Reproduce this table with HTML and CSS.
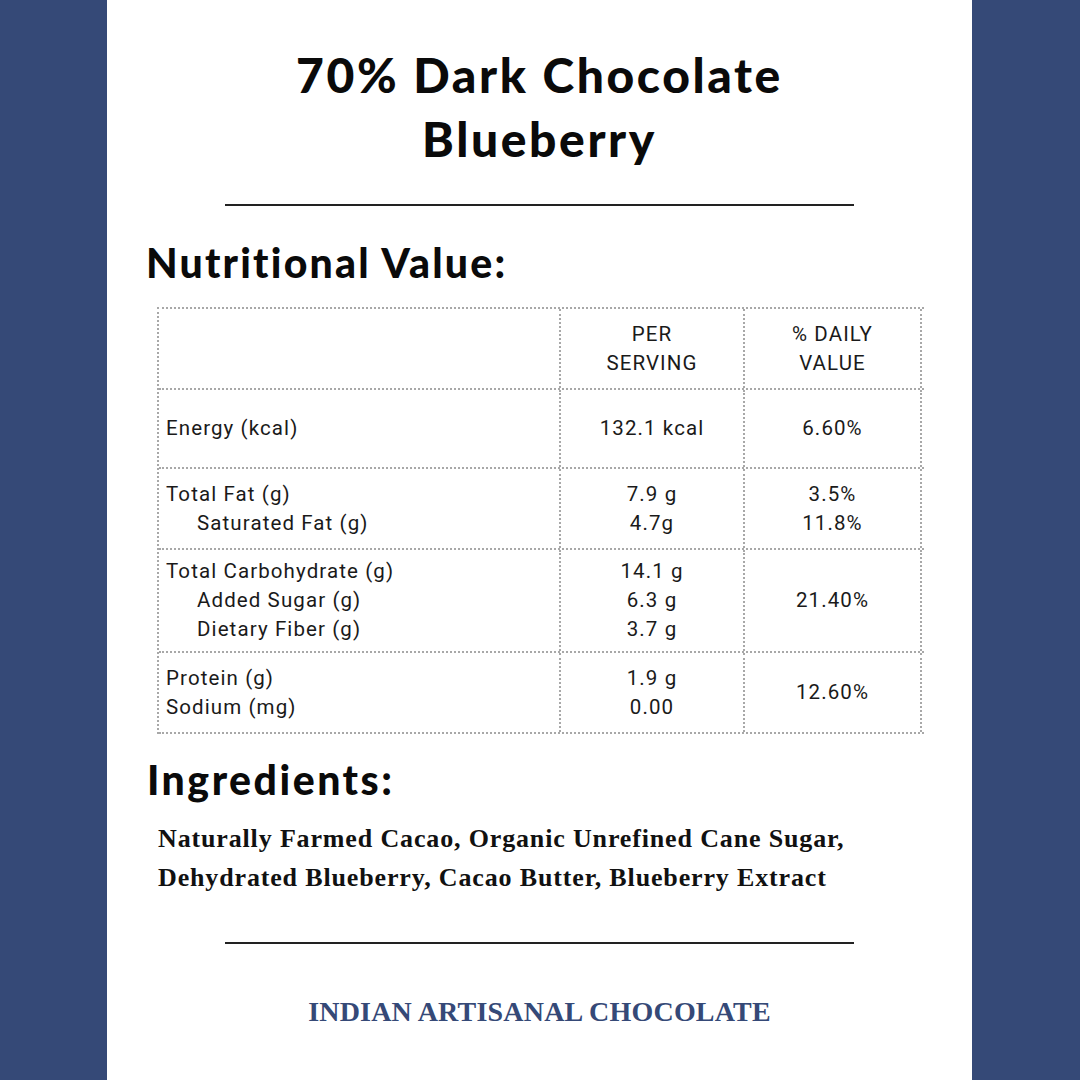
FILE: index.html
```html
<!DOCTYPE html>
<html>
<head>
<meta charset="utf-8">
<link rel="stylesheet" href="styles.css">
</head>
<body>
<div class="page">
  <div class="side"></div>
  <main class="panel">
    <h1 class="title">70% Dark Chocolate<br>Blueberry</h1>
    <hr class="rule rule-top">
    <h2 class="section nv">Nutritional Value:</h2>
    <div class="table">
      <div class="row head">
        <div class="cell c1"></div>
        <div class="cell c2">PER<br>SERVING</div>
        <div class="cell c3">% DAILY<br>VALUE</div>
      </div>
      <div class="row r-energy">
        <div class="cell c1">Energy (kcal)</div>
        <div class="cell c2">132.1 kcal</div>
        <div class="cell c3">6.60%</div>
      </div>
      <div class="row r-fat">
        <div class="cell c1"><span>Total Fat (g)</span><span class="sub">Saturated Fat (g)</span></div>
        <div class="cell c2"><span>7.9 g</span><span>4.7g</span></div>
        <div class="cell c3"><span>3.5%</span><span>11.8%</span></div>
      </div>
      <div class="row r-carb">
        <div class="cell c1"><span>Total Carbohydrate (g)</span><span class="sub">Added Sugar (g)</span><span class="sub">Dietary Fiber (g)</span></div>
        <div class="cell c2"><span>14.1 g</span><span>6.3 g</span><span>3.7 g</span></div>
        <div class="cell c3">21.40%</div>
      </div>
      <div class="row r-prot">
        <div class="cell c1"><span>Protein (g)</span><span>Sodium (mg)</span></div>
        <div class="cell c2"><span>1.9 g</span><span>0.00</span></div>
        <div class="cell c3">12.60%</div>
      </div>
    </div>
    <h2 class="section ing">Ingredients:</h2>
    <p class="ingredients">Naturally Farmed Cacao, Organic Unrefined Cane Sugar,<br>Dehydrated Blueberry, Cacao Butter, Blueberry Extract</p>
    <hr class="rule rule-bottom">
    <p class="brand">INDIAN ARTISANAL CHOCOLATE</p>
  </main>
  <div class="side"></div>
</div>
</body>
</html>
```
FILE: styles.css
```css
html, body {
  margin: 0;
  padding: 0;
  background: #ffffff;
}
.page {
  display: flex;
  width: 1080px;
  height: 1080px;
}
.side {
  width: 107px;
  flex: 0 0 auto;
  background: #354977;
}
.side:last-child {
  width: 108px;
}
.panel {
  flex: 1 1 auto;
  background: #ffffff;
  display: flex;
  flex-direction: column;
  padding: 0 40px;
  color: #111111;
}
.title {
  margin: 43px 0 0;
  text-align: center;
  font-family: Lato, "Noto Sans", sans-serif;
  font-weight: 900;
  font-size: 48px;
  line-height: 64px;
  letter-spacing: 2.6px;
  color: #0a0a0a;
}
.rule {
  border: 0;
  height: 2px;
  background: #222222;
  width: 629px;
  margin: 0 auto;
}
.rule-top {
  margin-top: 33px;
}
.section {
  font-family: Lato, "Noto Sans", sans-serif;
  font-weight: 900;
  font-size: 41px;
  color: #0a0a0a;
  margin: 0;
  line-height: 48px;
  letter-spacing: 2.2px;
}
.nv {
  margin-top: 33px;
  margin-left: -1px;
}
.table {
  margin-top: 20px;
  margin-left: 10px;
  width: 765px;
  border-top: 2px dotted #a8a8a8;
  border-left: 2px dotted #a8a8a8;
  font-family: Roboto, "Noto Sans", sans-serif;
  font-size: 20.5px;
  line-height: 29px;
  letter-spacing: 1.1px;
  color: #1a1a1a;
}
.row {
  display: grid;
  grid-template-columns: 402px 184px 177px;
  border-bottom: 2px dotted #a8a8a8;
}
.cell {
  border-right: 2px dotted #a8a8a8;
  display: flex;
  flex-direction: column;
  justify-content: center;
}
.c1 {
  padding-left: 7px;
  align-items: flex-start;
}
.c2, .c3 {
  text-align: center;
  align-items: center;
}
.sub {
  padding-left: 31px;
}
.head { height: 79px; }
.r-energy { height: 77px; }
.r-fat { height: 79px; }
.r-carb { height: 101px; }
.r-prot { height: 79px; }
.ing {
  margin-top: 22px;
  letter-spacing: 2.5px;
}
.ingredients {
  margin: 15px 0 0 11px;
  font-family: "Liberation Serif", serif;
  font-weight: 700;
  font-size: 26px;
  line-height: 39px;
  letter-spacing: 0.85px;
  color: #111111;
}
.rule-bottom {
  margin-top: 45px;
}
.brand {
  margin: 52px 0 0;
  text-align: center;
  font-family: "Liberation Serif", serif;
  font-weight: 700;
  font-size: 28px;
  color: #354977;
  letter-spacing: 0.2px;
}
```
